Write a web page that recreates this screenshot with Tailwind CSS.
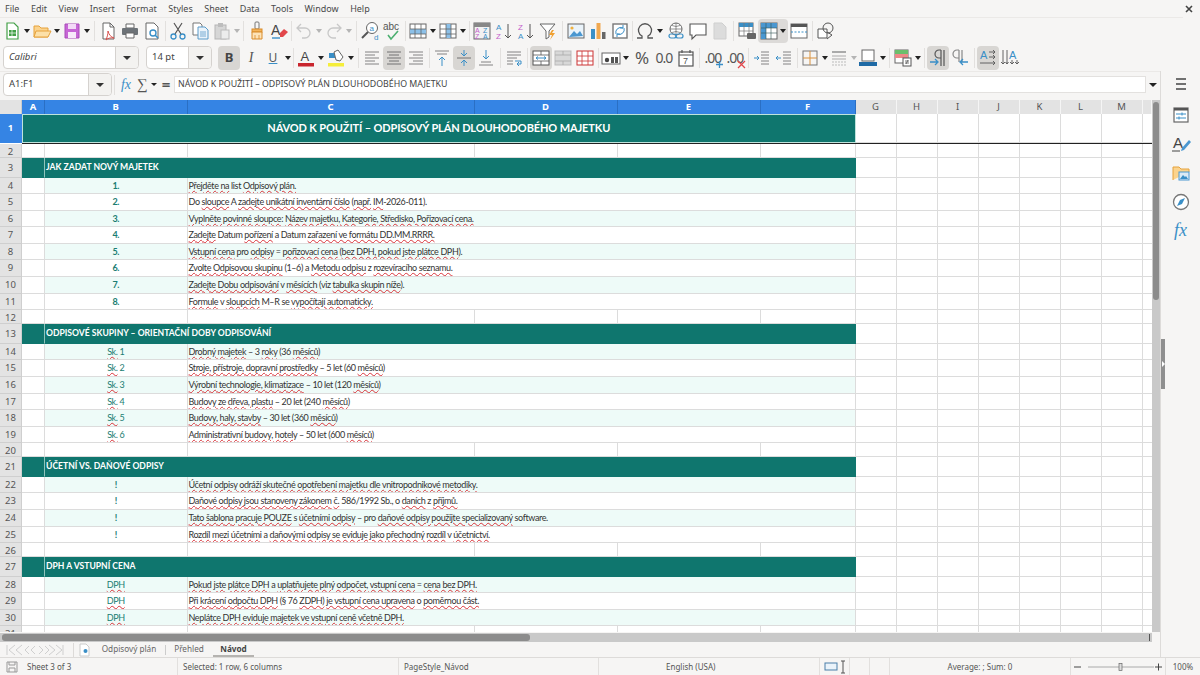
<!DOCTYPE html>
<html><head><meta charset="utf-8">
<script src="https://cdn.jsdelivr.net/npm/@tailwindcss/browser@4"></script>
</head>
<body class="w-[1200px] h-[675px] overflow-hidden bg-[#f6f5f4] font-['Noto_Sans',sans-serif] text-[#3d3d3d]">
<div class="relative flex flex-col w-[1200px] h-[675px]">

<!-- menu -->
<div class="h-[17px] shrink-0 flex items-center justify-between pl-[5px] pr-[7px] text-[9px] leading-none text-[#4a4a4a]">
  <div class="flex gap-[11.500px]"><span>File</span><span>Edit</span><span>View</span><span>Insert</span><span>Format</span><span>Styles</span><span>Sheet</span><span>Data</span><span>Tools</span><span>Window</span><span>Help</span></div>
  <svg class="w-[8px] h-[8px]" viewBox="0 0 8 8"><path d="M1 1l6 6M7 1L1 7" stroke="#444" stroke-width="1.6"/></svg>
</div>

<!-- toolbar 1 -->
<div class="h-[27px] shrink-0 mr-[17px] border-t border-[#ebe9e7] flex items-center pl-[1px] [&>span]:flex [&>span]:items-center [&>span]:justify-center [&>span]:w-[22px] [&>span]:h-[24px] [&>span]:shrink-0 [&>span]:rounded [&>span>svg]:w-[20px] [&>span>svg]:h-[20px] [&>svg]:w-[8px] [&>svg]:h-[4px] [&>svg]:shrink-0 [&>div]:flex [&>div]:justify-center [&>div]:shrink-0 [&>div>div]:w-px [&>div>div]:h-[20px] [&>div>div]:bg-[#e2e0de]">
  <span><svg viewBox="0 0 20 20"><path d="M5 2h7l4 4v12H5z" fill="#fff" stroke="#43a047" stroke-width="1.2"/><rect x="7" y="9" width="7" height="6" fill="#43a047"/><path d="M7 12h7M10 9v6" stroke="#fff" stroke-width=".7"/></svg></span>
  <svg viewBox="0 0 8 4"><path d="M1 0h6L4 4z" fill="#222"/></svg>
  <span><svg viewBox="0 0 20 20"><path d="M2 16V5h5l2 2h7v9z" fill="#fbd38d" stroke="#e6a23c"/><path d="M2 16l2-6h15l-3 6z" fill="#fce0a8" stroke="#e6a23c"/></svg></span>
  <svg viewBox="0 0 8 4"><path d="M1 0h6L4 4z" fill="#222"/></svg>
  <span><svg viewBox="0 0 20 20"><path d="M3 3h14v14H3z" fill="#c766d6" stroke="#a94cb8"/><rect x="6" y="3" width="8" height="5" fill="#f3daf7"/><rect x="6" y="11" width="8" height="6" fill="#f8e9fa"/></svg></span>
  <svg viewBox="0 0 8 4"><path d="M1 0h6L4 4z" fill="#222"/></svg>
  <div class="w-[6px]"><div></div></div>
  <span><svg viewBox="0 0 20 20"><path d="M5 2h7l4 4v12H5z" fill="#fff" stroke="#666"/><path d="M12 2v4h4" fill="none" stroke="#666"/><path d="M10 10c1 4 3 6 6 7-3-.5-6 0-8 2 1-3 2-5 2-9z" fill="none" stroke="#d9534f"/></svg></span>
  <span><svg viewBox="0 0 20 20"><path d="M6 3h8v4H6z" fill="#fff" stroke="#666"/><rect x="2" y="7" width="16" height="7" rx="1" fill="#6d7378"/><path d="M6 12h8v5H6z" fill="#fff" stroke="#666"/></svg></span>
  <span><svg viewBox="0 0 20 20"><path d="M4 2h8l4 4v12H4z" fill="#fff" stroke="#666"/><circle cx="11" cy="12" r="3" fill="none" stroke="#3a8fc7" stroke-width="1.4"/><path d="M13 14l3 3" stroke="#3a8fc7" stroke-width="1.6"/></svg></span>
  <div class="w-[4px]"><div></div></div>
  <span><svg viewBox="0 0 20 20"><path d="M6 2l7 11M14 2L7 13" stroke="#555" stroke-width="1.2"/><circle cx="5.500" cy="15.500" r="2.500" fill="none" stroke="#3a8fc7" stroke-width="1.300"/><circle cx="14.500" cy="15.500" r="2.500" fill="none" stroke="#3a8fc7" stroke-width="1.300"/></svg></span>
  <span><svg viewBox="0 0 20 20"><path d="M3 2h7l2 2v10H3z" fill="#fff" stroke="#777"/><path d="M8 6h7l3 3v9H8z" fill="#eaf3fa" stroke="#5a9bc9"/><path d="M10 11h6M10 13h6M10 15h6" stroke="#5a9bc9" stroke-width=".8"/></svg></span>
  <span><svg viewBox="0 0 20 20"><rect x="3" y="4" width="11" height="14" fill="#d6d6d6" stroke="#b5b5b5"/><rect x="6" y="2" width="5" height="4" fill="#bdbdbd"/><rect x="9" y="9" width="8" height="9" fill="#ececec" stroke="#bbb"/></svg></span>
  <svg viewBox="0 0 8 4"><path d="M1 0h6L4 4z" fill="#b5b5b5"/></svg>
  <div class="w-[5px]"><div></div></div>
  <span><svg viewBox="0 0 20 20"><rect x="8" y="1" width="4" height="7" rx="1" fill="none" stroke="#777"/><rect x="5" y="8" width="10" height="3" fill="#f3b45c" stroke="#d98c2b"/><path d="M5 11h10v7H5z" fill="#fde3b8" stroke="#d98c2b"/><path d="M8 14v4M12 14v4" stroke="#d98c2b" stroke-width=".8"/></svg></span>
  <span><svg viewBox="0 0 20 20"><text x="2" y="14" font-size="14" font-family="Liberation Sans" fill="#444">A</text><path d="M3 17h8" stroke="#3a8fc7" stroke-width="1.400"/><path d="M11 12l4-4 4 3-5 5h-3z" fill="#e2474b"/></svg></span>
  <div class="w-[3px]"><div></div></div>
  <span><svg viewBox="0 0 20 20"><path d="M7 3L3 7l4 4M3 7h8a5 5 0 0 1 0 10H8" fill="none" stroke="#c8c8c8" stroke-width="1.300"/></svg></span>
  <svg viewBox="0 0 8 4"><path d="M1 0h6L4 4z" fill="#b5b5b5"/></svg>
  <span><svg viewBox="0 0 20 20"><path d="M13 3l4 4-4 4M17 7H9a5 5 0 0 0 0 10h3" fill="none" stroke="#c8c8c8" stroke-width="1.300"/></svg></span>
  <svg viewBox="0 0 8 4"><path d="M1 0h6L4 4z" fill="#b5b5b5"/></svg>
  <div class="w-[6px]"><div></div></div>
  <span><svg viewBox="0 0 20 20"><circle cx="12" cy="7" r="5.500" fill="#fff" stroke="#666"/><path d="M8 11l-6 6" stroke="#555" stroke-width="2"/><text x="9.500" y="10" font-size="8" font-family="Liberation Sans" fill="#3a8fc7">a</text><text x="14" y="19" font-size="8" font-family="Liberation Sans" fill="#3a8fc7">d</text></svg></span>
  <span><svg viewBox="0 0 20 20"><text x="1" y="9" font-size="10" font-family="Liberation Sans" fill="#555">abc</text><path d="M6 14l3 4 7-8" fill="none" stroke="#4caf70" stroke-width="1.600"/></svg></span>
  <div class="w-[4px]"><div></div></div>
  <span><svg viewBox="0 0 20 20"><rect x="2" y="3" width="16" height="14" fill="#fff" stroke="#666"/><rect x="2" y="8" width="16" height="5" fill="#8cc0e8"/><path d="M2 8h16M2 13h16M7 3v14M13 3v14" stroke="#666" stroke-width=".8"/></svg></span>
  <svg viewBox="0 0 8 4"><path d="M1 0h6L4 4z" fill="#222"/></svg>
  <span><svg viewBox="0 0 20 20"><rect x="2" y="3" width="16" height="14" fill="#fff" stroke="#666"/><rect x="8" y="3" width="5" height="14" fill="#8cc0e8"/><path d="M2 8h16M2 13h16M8 3v14M13 3v14" stroke="#666" stroke-width=".8"/></svg></span>
  <svg viewBox="0 0 8 4"><path d="M1 0h6L4 4z" fill="#222"/></svg>
  <div class="w-[4px]"><div></div></div>
  <span><svg viewBox="0 0 20 20"><rect x="2" y="2" width="16" height="16" fill="#f2f2f2" stroke="#666"/><rect x="2" y="2" width="16" height="4" fill="#888"/><text x="3" y="12" font-size="7" font-family="Liberation Sans" fill="#c45ecb">A</text><text x="11" y="12" font-size="7" font-family="Liberation Sans" fill="#3a8fc7">Z</text><text x="3" y="18" font-size="7" font-family="Liberation Sans" fill="#c45ecb">Z</text><text x="11" y="18" font-size="7" font-family="Liberation Sans" fill="#3a8fc7">A</text></svg></span>
  <span><svg viewBox="0 0 20 20"><text x="2" y="9" font-size="8" font-family="Liberation Sans" fill="#3a8fc7">A</text><text x="2" y="18" font-size="8" font-family="Liberation Sans" fill="#c45ecb">Z</text><path d="M14 3v14M11 14l3 3 3-3" fill="none" stroke="#555"/></svg></span>
  <span><svg viewBox="0 0 20 20"><text x="2" y="9" font-size="8" font-family="Liberation Sans" fill="#c45ecb">Z</text><text x="2" y="18" font-size="8" font-family="Liberation Sans" fill="#3a8fc7">A</text><path d="M14 3v14M11 14l3 3 3-3" fill="none" stroke="#555"/></svg></span>
  <span><svg viewBox="0 0 20 20"><path d="M2 3h15l-6 7v6l-3 2v-8z" fill="#fff" stroke="#666"/><path d="M14 9l-3 5h3l-2 5 5-7h-3l2-3z" fill="#f0a030"/></svg></span>
  <div class="w-[6px]"><div></div></div>
  <span><svg viewBox="0 0 20 20"><rect x="2" y="3" width="16" height="14" fill="#eaf3fa" stroke="#666"/><circle cx="6" cy="7" r="1.600" fill="#f0b040"/><path d="M3 16l5-6 3 3 3-3 3 5z" fill="#4a97d0"/></svg></span>
  <span><svg viewBox="0 0 20 20"><rect x="3" y="8" width="4" height="10" fill="#3a8fc7"/><rect x="8.500" y="2" width="4" height="16" fill="#f0a850"/><rect x="14" y="11" width="3.500" height="7" fill="#666"/></svg></span>
  <span><svg viewBox="0 0 20 20"><rect x="3" y="3" width="14" height="14" fill="#fff" stroke="#777" stroke-width="1.400"/><path d="M6 13a5 5 0 0 1 7-6M14 7a5 5 0 0 1-7 6" fill="none" stroke="#3a8fc7"/><path d="M13 4v3h-3M7 16v-3h3" fill="none" stroke="#3a8fc7"/></svg></span>
  <div class="w-[3px]"><div></div></div>
  <span><svg viewBox="0 0 20 20"><path d="M2 17h5v-2a6.500 6.500 0 1 1 6 0v2h5" fill="none" stroke="#555" stroke-width="1.300"/></svg></span>
  <svg viewBox="0 0 8 4"><path d="M1 0h6L4 4z" fill="#222"/></svg>
  <div class="w-px"></div>
  <span><svg viewBox="0 0 20 20"><circle cx="10" cy="8" r="6" fill="#fff" stroke="#666"/><path d="M4 8h12M10 2v12M6 4.500q4 2 8 0M6 11.500q4-2 8 0" fill="none" stroke="#666" stroke-width=".7"/><rect x="3" y="13" width="7" height="4" rx="2" fill="none" stroke="#3a8fc7" stroke-width="1.200"/><rect x="10" y="13" width="7" height="4" rx="2" fill="none" stroke="#3a8fc7" stroke-width="1.200"/></svg></span>
  <span><svg viewBox="0 0 20 20"><path d="M2 3h16v11H8l-4 4v-4H2z" fill="#fff" stroke="#555" stroke-width="1.100"/></svg></span>
  <span><svg viewBox="0 0 20 20"><path d="M4 2h8l4 4v12H4z" fill="#dcdcdc" stroke="#cfcfcf"/></svg></span>
  <div class="w-[5px]"><div></div></div>
  <span><svg viewBox="0 0 20 20"><rect x="2" y="2" width="14" height="13" fill="#fff" stroke="#666"/><rect x="2" y="2" width="14" height="4" fill="#3a8fc7"/><path d="M2 10h14M7 2v13M12 2v13" stroke="#777" stroke-width=".7"/><rect x="10" y="12" width="9" height="6" rx="1" fill="#666"/></svg></span>
  <span class="bg-[#dcdad8] w-[30px]! justify-start! pl-px"><svg viewBox="0 0 20 20"><rect x="2" y="2" width="16" height="16" fill="#fff" stroke="#666"/><rect x="2" y="2" width="16" height="5" fill="#4a97d0"/><rect x="2" y="2" width="5" height="16" fill="#4a97d0"/><path d="M2 7h16M2 12h16M7 2v16M12 2v16" stroke="#355" stroke-width=".6"/></svg><svg class="w-[8px]! h-[4px]! shrink-0" viewBox="0 0 8 4"><path d="M1 0h6L4 4z" fill="#222"/></svg></span>
  <span><svg viewBox="0 0 20 20"><rect x="2" y="3" width="16" height="14" fill="#fff" stroke="#666"/><rect x="2" y="3" width="16" height="3" fill="#555"/><path d="M2 11h16" stroke="#3a8fc7" stroke-dasharray="2 1.500"/></svg></span>
  <div class="w-[5px]"><div></div></div>
  <span><svg viewBox="0 0 20 20"><path d="M2 8h9v9H2z" fill="#fff" stroke="#555"/><circle cx="12" cy="7" r="5" fill="none" stroke="#555"/><path d="M11 11l5 3-5 4" fill="none" stroke="#555"/></svg></span>
</div>

<!-- toolbar 2 -->
<div class="h-[27px] shrink-0 flex items-center pl-[3px] [&>span]:flex [&>span]:items-center [&>span]:justify-center [&>span]:w-[22px] [&>span]:h-[24px] [&>span]:shrink-0 [&>span]:rounded [&>span>svg]:w-[20px] [&>span>svg]:h-[20px] [&>svg]:w-[8px] [&>svg]:h-[4px] [&>svg]:shrink-0 [&>div]:flex [&>div]:justify-center [&>div]:shrink-0 [&>div>div]:w-px [&>div>div]:h-[20px] [&>div>div]:bg-[#e2e0de]">
  <div class="w-[136px] h-[23px] border border-[#d5d2cf] rounded bg-white items-center justify-between! text-[9.500px] italic text-[#444]"><p class="pl-[5px]">Calibri</p><p class="w-[23px] h-full bg-[#f3f2f0] border-l border-[#d5d2cf] rounded-r flex items-center justify-center"><svg class="w-[8px] h-[4px]" viewBox="0 0 8 4"><path d="M0 0h8L4 4z" fill="#333"/></svg></p></div>
  <div class="w-[7px]"></div>
  <div class="w-[66px] h-[23px] border border-[#d5d2cf] rounded bg-white items-center justify-between! text-[9.500px] text-[#444]"><p class="pl-[5px]">14 pt</p><p class="w-[23px] h-full bg-[#f3f2f0] border-l border-[#d5d2cf] rounded-r flex items-center justify-center"><svg class="w-[8px] h-[4px]" viewBox="0 0 8 4"><path d="M0 0h8L4 4z" fill="#333"/></svg></p></div>
  <div class="w-[6px]"></div>
  <span class="bg-[#d8d6d3] text-[13px] font-bold text-[#444]">B</span>
  <span class="text-[14px] italic font-['Liberation_Serif',serif] text-[#555]">I</span>
  <span class="text-[12px] underline decoration-[#3a8fc7] text-[#555]">U</span>
  <svg viewBox="0 0 8 4"><path d="M1 0h6L4 4z" fill="#222"/></svg>
  <div class="w-[3px]"><div></div></div>
  <span><svg viewBox="0 0 20 20"><text x="4.500" y="13" font-size="13" font-family="Liberation Sans" fill="#444">A</text><rect x="2" y="15" width="16" height="3.500" fill="#c9252d"/></svg></span>
  <svg viewBox="0 0 8 4"><path d="M1 0h6L4 4z" fill="#222"/></svg>
  <span><svg viewBox="0 0 20 20"><rect x="2" y="15" width="16" height="3.500" fill="#f5ee3a"/><rect x="3" y="5" width="6" height="5" fill="#3a8fc7"/><path d="M8 4l4-2 5 7-3 4-4-1z" fill="#fff" stroke="#666"/></svg></span>
  <svg viewBox="0 0 8 4"><path d="M1 0h6L4 4z" fill="#222"/></svg>
  <div class="w-[6px]"><div></div></div>
  <span><svg viewBox="0 0 20 20"><path d="M3 4h14M3 7h10M3 10h14M3 13h10M3 16h14" stroke="#777" stroke-width=".9"/></svg></span>
  <span class="bg-[#d8d6d3]"><svg viewBox="0 0 20 20"><path d="M3 4h14M5 7h10M3 10h14M5 13h10M3 16h14" stroke="#666" stroke-width=".9"/></svg></span>
  <span><svg viewBox="0 0 20 20"><path d="M3 4h14M7 7h10M3 10h14M7 13h10M3 16h14" stroke="#777" stroke-width=".9"/></svg></span>
  <div class="w-[4px]"><div></div></div>
  <span><svg viewBox="0 0 20 20"><path d="M3 3h14M5 6h10" stroke="#777" stroke-width=".9"/><path d="M10 18V9M7 12l3-3 3 3" fill="none" stroke="#3a8fc7"/></svg></span>
  <span class="bg-[#d8d6d3]"><svg viewBox="0 0 20 20"><path d="M3 10h14" stroke="#666" stroke-width=".9"/><path d="M10 2v6M7 5l3 3 3-3M10 18v-6M7 15l3-3 3 3" fill="none" stroke="#3a8fc7"/></svg></span>
  <span><svg viewBox="0 0 20 20"><path d="M5 14h10M3 17h14" stroke="#777" stroke-width=".9"/><path d="M10 2v9M7 8l3 3 3-3" fill="none" stroke="#3a8fc7"/></svg></span>
  <div class="w-[6px]"><div></div></div>
  <span><svg viewBox="0 0 20 20"><path d="M3 4h14M3 7h14M3 10h10M3 13h6M3 16h6" stroke="#777" stroke-width=".9"/><path d="M11 13h6v3h-4M15 14l-2 2 2 2" fill="none" stroke="#3a8fc7"/></svg></span>
  <div class="w-[5px]"><div></div></div>
  <span class="bg-[#d8d6d3]"><svg viewBox="0 0 20 20"><rect x="2" y="3" width="16" height="14" fill="#fff" stroke="#555"/><path d="M2 7h16M2 13h16M10 3v4M10 13v4" stroke="#555" stroke-width=".8"/><path d="M5 10h10M5 10l2-1.500M5 10l2 1.500M15 10l-2-1.500M15 10l-2 1.500" stroke="#3a8fc7"/></svg></span>
  <span><svg viewBox="0 0 20 20"><rect x="2" y="3" width="16" height="14" fill="#d8d8d8" stroke="#bbb"/><path d="M2 7h16M2 13h16M10 3v4M10 13v4" stroke="#aaa" stroke-width=".8"/></svg></span>
  <span><svg viewBox="0 0 20 20"><rect x="2" y="3" width="16" height="14" fill="#fff" stroke="#c33"/><path d="M2 8h16M2 13h16M7 3v14M13 3v14" stroke="#c33" stroke-width=".8"/></svg></span>
  <div class="w-[4px]"><div></div></div>
  <span><svg viewBox="0 0 20 20"><rect x="1" y="5" width="18" height="11" fill="#fff" stroke="#666"/><circle cx="6" cy="12" r="2.200" fill="#444"/><rect x="10" y="9" width="3" height="6" fill="#555"/><rect x="14" y="9" width="3" height="6" fill="#555"/></svg></span>
  <svg viewBox="0 0 8 4"><path d="M1 0h6L4 4z" fill="#222"/></svg>
  <div class="w-px"></div>
  <span class="text-[17px] text-[#555]">%</span>
  <span class="text-[14px] tracking-[-1px] text-[#555]">0.0</span>
  <span><svg viewBox="0 0 20 20"><rect x="3" y="4" width="14" height="14" fill="#fff" stroke="#555" stroke-width="1.200"/><path d="M3 7h14M6 2v3M14 2v3" stroke="#555" stroke-width="1.200"/><text x="7" y="16" font-size="9" font-family="Liberation Sans" fill="#555">7</text></svg></span>
  <div class="w-[5px]"><div></div></div>
  <span class="relative text-[14px] tracking-[-1px] text-[#555]">.00<svg class="absolute right-0 bottom-[1px] w-[9px]! h-[9px]!" viewBox="0 0 9 9"><path d="M4.500 1v7M1 4.500h7" stroke="#3a8fc7" stroke-width="1.300"/></svg></span>
  <span class="relative text-[14px] tracking-[-1px] text-[#555]">.00<svg class="absolute right-0 bottom-[1px] w-[9px]! h-[9px]!" viewBox="0 0 9 9"><path d="M1 1l7 7M8 1L1 8" stroke="#e2474b" stroke-width="1.300"/></svg></span>
  <div class="w-[5px]"><div></div></div>
  <span><svg viewBox="0 0 20 20"><path d="M9 4h8M9 7h8M9 10h8M9 13h8M9 16h8" stroke="#777" stroke-width=".9"/><path d="M2 10h5M5 8l2 2-2 2" fill="none" stroke="#3a8fc7"/></svg></span>
  <span><svg viewBox="0 0 20 20"><path d="M9 4h8M9 7h8M9 10h8M9 13h8M9 16h8" stroke="#777" stroke-width=".9"/><path d="M7 10H2M4 8l-2 2 2 2" fill="none" stroke="#3a8fc7"/></svg></span>
  <div class="w-[4px]"><div></div></div>
  <span><svg viewBox="0 0 20 20"><rect x="3" y="3" width="14" height="14" fill="none" stroke="#777"/><path d="M10 3v14M3 10h14" stroke="#d9913c"/></svg></span>
  <svg viewBox="0 0 8 4"><path d="M1 0h6L4 4z" fill="#222"/></svg>
  <div class="w-0 -ml-px"></div>
  <span><svg viewBox="0 0 20 20"><path d="M3 4h14" stroke="#aaa" stroke-width="2"/><path d="M3 8h14M3 11h14" stroke="#aaa" stroke-width="1.200"/><path d="M3 14h14M3 17h14" stroke="#bbb" stroke-dasharray="2 1"/></svg></span>
  <svg viewBox="0 0 8 4"><path d="M1 0h6L4 4z" fill="#b5b5b5"/></svg>
  <div class="w-0 -ml-px"></div>
  <span><svg viewBox="0 0 20 20"><rect x="4" y="2" width="12" height="11" fill="#fff" stroke="#666"/><rect x="1" y="14" width="18" height="4" fill="#1f6aa5"/></svg></span>
  <svg viewBox="0 0 8 4"><path d="M1 0h6L4 4z" fill="#222"/></svg>
  <div class="w-[5px]"><div></div></div>
  <span><svg viewBox="0 0 20 20"><rect x="2" y="2" width="13" height="13" fill="#fff" stroke="#666"/><rect x="2" y="2" width="13" height="4" fill="#6cbf6c"/><rect x="2" y="6" width="13" height="4" fill="#e88"/><rect x="10" y="10" width="8" height="8" fill="#fff" stroke="#555"/><path d="M12 13h4M12 15h4M15 12l-2 4" stroke="#555" stroke-width=".8"/></svg></span>
  <svg viewBox="0 0 8 4"><path d="M1 0h6L4 4z" fill="#222"/></svg>
  <div class="w-[5px]"><div></div></div>
  <span class="bg-[#d8d6d3]"><svg viewBox="0 0 20 20"><path d="M16 2v16M13 2v16M13 2h-2a4 4 0 0 0 0 8h2" fill="none" stroke="#555" stroke-width="1.200"/><path d="M2 14h7M7 11l3 3-3 3" fill="none" stroke="#3a8fc7" stroke-width="1.300"/></svg></span>
  <span><svg viewBox="0 0 20 20"><path d="M12 2v12M9 2v12M9 2H7a4 4 0 0 0 0 8h2" fill="none" stroke="#888" stroke-width="1.200"/><path d="M18 14h-7M13 11l-3 3 3 3" fill="none" stroke="#3a8fc7" stroke-width="1.300"/></svg></span>
  <div class="w-[6px]"><div></div></div>
  <span class="bg-[#d8d6d3]"><svg viewBox="0 0 20 20"><text x="2" y="11" font-size="11" font-family="Liberation Sans" fill="#3a8fc7">A</text><path d="M11 4h6M15 2l2 2-2 2M11 9h6M15 7l2 2-2 2M2 15h15M15 13l2 2-2 2" fill="none" stroke="#555" stroke-width=".9"/></svg></span>
  <span><svg viewBox="0 0 20 20"><text x="9" y="11" font-size="11" font-family="Liberation Sans" fill="#3a8fc7">A</text><path d="M3 2v14M1 14l2 2 2-2M7 2v14M5.500 14l1.500 2 1.500-2M12 12v4M10 14l2 2 2-2M17 12v4M15 14l2 2 2-2" fill="none" stroke="#555" stroke-width=".9"/></svg></span>
</div>

<!-- lower region: main + sidebar -->
<div class="flex flex-1 min-h-0">
  <div class="w-[1161px] flex flex-col border-r border-[#dddbd9]">
    <!-- formula bar -->
    <div class="h-[29px] shrink-0 border-t border-[#ebe9e7] flex items-center pb-[3px] text-[8.800px] text-[#444] pl-[3px]">
      <div class="w-[109px] h-[23px] border border-[#d5d2cf] rounded bg-white flex items-center justify-between"><p class="pl-[5px] text-[9.500px]">A1:F1</p><p class="w-[23px] h-full bg-[#f3f2f0] border-l border-[#d5d2cf] rounded-r flex items-center justify-center"><svg class="w-[8px] h-[4px]" viewBox="0 0 8 4"><path d="M0 0h8L4 4z" fill="#333"/></svg></p></div>
      <div class="w-px h-[20px] bg-[#e2e0de] ml-[2px]"></div>
      <span class="ml-[3px] w-[16px] text-center italic font-['Liberation_Serif',serif] text-[14px] leading-none text-[#3a8fc7]">fx</span>
      <span class="ml-[2px] w-[12px] text-center font-['Liberation_Serif',serif] text-[15px] leading-none text-[#555]">∑</span>
      <svg class="ml-[3px] w-[6px] h-[3px]" viewBox="0 0 8 4"><path d="M0 0h8L4 4z" fill="#222"/></svg>
      <span class="ml-[4px] w-[10px] text-center text-[15px] leading-none font-bold text-[#555]">=</span>
      <div class="ml-[3px] w-[972px] h-[17px] bg-white border border-[#e3e1df] flex items-center pl-[3px] text-[#444]">NÁVOD K POUŽITÍ – ODPISOVÝ PLÁN DLOUHODOBÉHO MAJETKU</div>
      <svg class="ml-[3px] w-[8px] h-[4px]" viewBox="0 0 8 4"><path d="M0 0h8L4 4z" fill="#222"/></svg>
    </div>

    <!-- sheet + v scrollbar -->
    <div class="flex h-[532px] shrink-0 bg-white overflow-hidden">
      <div class="w-[1152px] shrink-0 overflow-hidden">
        <!-- column headers -->
        <div class="h-[14px] grid grid-cols-[22px_23px_142.500px_287px_143px_143px_95px_41px_41px_41px_41px_41px_41px_41px_9.500px] text-[9.500px] leading-[13px] text-center font-['Noto_Sans',sans-serif] bg-[#e3e3e3] text-[#555] [&>div]:border-r">
          <div class="bg-[#e3e3e3] border-[#ccc]"></div>
          <div class="bg-[#3584e4] border-[#2a6fc4] text-white font-bold">A</div>
          <div class="bg-[#3584e4] border-[#2a6fc4] text-white font-bold">B</div>
          <div class="bg-[#3584e4] border-[#2a6fc4] text-white font-bold">C</div>
          <div class="bg-[#3584e4] border-[#2a6fc4] text-white font-bold">D</div>
          <div class="bg-[#3584e4] border-[#2a6fc4] text-white font-bold">E</div>
          <div class="bg-[#3584e4] border-[#2a6fc4] text-white font-bold">F</div>
          <div class="border-[#f5f5f5]">G</div><div class="border-[#f5f5f5]">H</div><div class="border-[#f5f5f5]">I</div><div class="border-[#f5f5f5]">J</div><div class="border-[#f5f5f5]">K</div><div class="border-[#f5f5f5]">L</div><div class="border-[#f5f5f5]">M</div><div class="border-[#f5f5f5]"></div>
        </div>

        <!-- rows -->
        <div class="font-['Lato',sans-serif] text-[9px] tracking-[-0.38px] text-[#333] [&>div]:grid [&>div]:grid-cols-[22px_23px_142.500px_287px_143px_143px_95px_296.500px] [&>div>*]:border-b [&>div>*]:border-r [&>div>*]:border-[#dcdcdc] [&>div>*]:overflow-hidden [&>div>*]:whitespace-nowrap [&>div>*]:leading-[15px] [&>div>*:first-child]:bg-[#e3e3e3] [&>div>*:first-child]:border-[#cfcfcf] [&>div>*:first-child]:text-center [&>div>*:first-child]:font-['Noto_Sans',sans-serif] [&>div>*:first-child]:tracking-normal [&>div>*:first-child]:text-[#555] [&>div>*:first-child]:text-[9.500px] [&>div>*:last-child]:border-r-0 [&>div>*:last-child]:bg-[repeating-linear-gradient(90deg,transparent_0,transparent_40px,#dcdcdc_40px,#dcdcdc_41px)] [&_u]:decoration-wavy [&_u]:decoration-[#d8333a] [&_u]:decoration-1 [&_u]:underline-offset-[1px]">

          <div class="h-[29px]"><div class="bg-[#3584e4]! text-white! font-bold leading-[28px]! border-[#3584e4]!">1</div><div class="col-span-6 bg-[#0f766e] border border-[#bfe3dc]! text-white font-bold text-[11px] tracking-[-0.12px] text-center leading-[26px]!">NÁVOD K POUŽITÍ – ODPISOVÝ PLÁN DLOUHODOBÉHO MAJETKU</div><div></div></div>
          <div class="h-px ml-[22px] bg-[#222] w-[1130px]"></div>
          <div class="h-[14px]"><div>2</div><div></div><div></div><div></div><div></div><div></div><div></div><div></div></div>

          <div class="h-[19.500px]"><div class="leading-[19px]!">3</div><div class="bg-[#0f766e] border-[#0f766e]! border-r-[#8fc4bb]!"></div><div class="col-span-5 bg-[#0f766e] border-[#0f766e]! text-white font-bold text-[8.600px] tracking-normal pl-px leading-[18px]!">JAK ZADAT NOVÝ MAJETEK</div><div></div></div>

          <div class="h-[16.600px]"><div>4</div><div></div><div class="bg-[#eefbf8] text-center text-[#1a7d72] font-bold">1.</div><div class="col-span-4 bg-[#eefbf8] pl-px"><u>Přejděte na</u> list <u>Odpisový plán.</u></div><div></div></div>
          <div class="h-[16.600px]"><div>5</div><div></div><div class="text-center text-[#1a7d72] font-bold">2.</div><div class="col-span-4 pl-px">Do <u>sloupce</u> A <u>zadejte unikátní inventární číslo</u> (<u>např.</u> <u>IM</u>-2026-011).</div><div></div></div>
          <div class="h-[16.600px]"><div>6</div><div></div><div class="bg-[#eefbf8] text-center text-[#1a7d72] font-bold">3.</div><div class="col-span-4 bg-[#eefbf8] pl-px"><u>Vyplněte povinné sloupce:</u> <u>Název majetku, Kategorie, Středisko, Pořizovací cena.</u></div><div></div></div>
          <div class="h-[16.600px]"><div>7</div><div></div><div class="text-center text-[#1a7d72] font-bold">4.</div><div class="col-span-4 pl-px"><u>Zadejte</u> Datum <u>pořízení</u> a Datum <u>zařazení ve formátu DD.MM.RRRR.</u></div><div></div></div>
          <div class="h-[16.600px]"><div>8</div><div></div><div class="bg-[#eefbf8] text-center text-[#1a7d72] font-bold">5.</div><div class="col-span-4 bg-[#eefbf8] pl-px"><u>Vstupní cena</u> pro <u>odpisy</u> = <u>pořizovací cena</u> (<u>bez DPH, pokud jste plátce DPH</u>).</div><div></div></div>
          <div class="h-[16.600px]"><div>9</div><div></div><div class="text-center text-[#1a7d72] font-bold">6.</div><div class="col-span-4 pl-px"><u>Zvolte Odpisovou skupinu</u> (1–6) a <u>Metodu odpisu</u> z <u>rozevíracího seznamu.</u></div><div></div></div>
          <div class="h-[16.600px]"><div>10</div><div></div><div class="bg-[#eefbf8] text-center text-[#1a7d72] font-bold">7.</div><div class="col-span-4 bg-[#eefbf8] pl-px"><u>Zadejte Dobu odpisování</u> v <u>měsících</u> (viz <u>tabulka skupin níže</u>).</div><div></div></div>
          <div class="h-[16.600px]"><div>11</div><div></div><div class="text-center text-[#1a7d72] font-bold">8.</div><div class="col-span-4 pl-px"><u>Formule</u> v <u>sloupcích</u> M–R se <u>vypočítají automaticky.</u></div><div></div></div>
          <div class="h-[14px]"><div>12</div><div></div><div></div><div></div><div></div><div></div><div></div><div></div></div>

          <div class="h-[19.500px]"><div class="leading-[19px]!">13</div><div class="bg-[#0f766e] border-[#0f766e]! border-r-[#8fc4bb]!"></div><div class="col-span-5 bg-[#0f766e] border-[#0f766e]! text-white font-bold text-[8.600px] tracking-normal pl-px leading-[18px]!">ODPISOVÉ SKUPINY – ORIENTAČNÍ DOBY ODPISOVÁNÍ</div><div></div></div>

          <div class="h-[16.600px]"><div>14</div><div></div><div class="bg-[#eefbf8] text-center text-[#1a7d72]"><u>Sk.</u> 1</div><div class="col-span-4 bg-[#eefbf8] pl-px"><u>Drobný majetek</u> – 3 <u>roky</u> (36 <u>měsíců</u>)</div><div></div></div>
          <div class="h-[16.600px]"><div>15</div><div></div><div class="text-center text-[#1a7d72]"><u>Sk.</u> 2</div><div class="col-span-4 pl-px"><u>Stroje, přístroje, dopravní prostředky</u> – 5 let (60 <u>měsíců</u>)</div><div></div></div>
          <div class="h-[16.600px]"><div>16</div><div></div><div class="bg-[#eefbf8] text-center text-[#1a7d72]"><u>Sk.</u> 3</div><div class="col-span-4 bg-[#eefbf8] pl-px"><u>Výrobní technologie, klimatizace</u> – 10 let (120 <u>měsíců</u>)</div><div></div></div>
          <div class="h-[16.600px]"><div>17</div><div></div><div class="text-center text-[#1a7d72]"><u>Sk.</u> 4</div><div class="col-span-4 pl-px"><u>Budovy ze dřeva, plastu</u> – 20 let (240 <u>měsíců</u>)</div><div></div></div>
          <div class="h-[16.600px]"><div>18</div><div></div><div class="bg-[#eefbf8] text-center text-[#1a7d72]"><u>Sk.</u> 5</div><div class="col-span-4 bg-[#eefbf8] pl-px"><u>Budovy, haly, stavby</u> – 30 let (360 <u>měsíců</u>)</div><div></div></div>
          <div class="h-[16.600px]"><div>19</div><div></div><div class="text-center text-[#1a7d72]"><u>Sk.</u> 6</div><div class="col-span-4 pl-px"><u>Administrativní budovy, hotely</u> – 50 let (600 <u>měsíců</u>)</div><div></div></div>
          <div class="h-[14px]"><div>20</div><div></div><div></div><div></div><div></div><div></div><div></div><div></div></div>

          <div class="h-[19.500px]"><div class="leading-[19px]!">21</div><div class="bg-[#0f766e] border-[#0f766e]! border-r-[#8fc4bb]!"></div><div class="col-span-5 bg-[#0f766e] border-[#0f766e]! text-white font-bold text-[8.600px] tracking-normal pl-px leading-[18px]!">ÚČETNÍ VS. DAŇOVÉ ODPISY</div><div></div></div>

          <div class="h-[16.600px]"><div>22</div><div></div><div class="bg-[#eefbf8] text-center text-[#1a7d72] font-bold">!</div><div class="col-span-4 bg-[#eefbf8] pl-px"><u>Účetní odpisy odráží skutečné opotřebení majetku dle vnitropodnikové metodiky.</u></div><div></div></div>
          <div class="h-[16.600px]"><div>23</div><div></div><div class="text-center text-[#1a7d72] font-bold">!</div><div class="col-span-4 pl-px"><u>Daňové odpisy jsou stanoveny zákonem</u> <u>č.</u> 586/1992 Sb., o <u>daních</u> z <u>příjmů.</u></div><div></div></div>
          <div class="h-[16.600px]"><div>24</div><div></div><div class="bg-[#eefbf8] text-center text-[#1a7d72] font-bold">!</div><div class="col-span-4 bg-[#eefbf8] pl-px"><u>Tato šablona pracuje POUZE</u> s <u>účetními odpisy</u> – pro <u>daňové odpisy použijte specializovaný</u> software.</div><div></div></div>
          <div class="h-[16.600px]"><div>25</div><div></div><div class="text-center text-[#1a7d72] font-bold">!</div><div class="col-span-4 pl-px"><u>Rozdíl mezi účetními</u> a <u>daňovými odpisy se eviduje jako přechodný rozdíl</u> v <u>účetnictví.</u></div><div></div></div>
          <div class="h-[14px]"><div>26</div><div></div><div></div><div></div><div></div><div></div><div></div><div></div></div>

          <div class="h-[19.500px]"><div class="leading-[19px]!">27</div><div class="bg-[#0f766e] border-[#0f766e]! border-r-[#8fc4bb]!"></div><div class="col-span-5 bg-[#0f766e] border-[#0f766e]! text-white font-bold text-[8.600px] tracking-normal pl-px leading-[18px]!">DPH A VSTUPNÍ CENA</div><div></div></div>

          <div class="h-[16.600px]"><div>28</div><div></div><div class="bg-[#eefbf8] text-center text-[#1a7d72]"><u>DPH</u></div><div class="col-span-4 bg-[#eefbf8] pl-px"><u>Pokud jste plátce DPH</u> a <u>uplatňujete plný odpočet, vstupní cena</u> = <u>cena bez DPH.</u></div><div></div></div>
          <div class="h-[16.600px]"><div>29</div><div></div><div class="text-center text-[#1a7d72]"><u>DPH</u></div><div class="col-span-4 pl-px"><u>Při krácení odpočtu DPH</u> (§ 76 <u>ZDPH)</u> <u>je vstupní cena upravena</u> o <u>poměrnou část.</u></div><div></div></div>
          <div class="h-[16.600px]"><div>30</div><div></div><div class="bg-[#eefbf8] text-center text-[#1a7d72]"><u>DPH</u></div><div class="col-span-4 bg-[#eefbf8] pl-px"><u>Neplátce DPH eviduje majetek ve vstupní ceně včetně DPH.</u></div><div></div></div>
          <div class="h-[14px]"><div>31</div><div></div><div></div><div></div><div></div><div></div><div></div><div></div></div>
        </div>
      </div>
      <!-- vertical scrollbar -->
      <div class="w-[8px] shrink-0 bg-[#c9c9c9] pt-[2px] px-[1px]"><div class="h-[198px] bg-[#8c8c8c] rounded-[3px]"></div></div>
    </div>

    <!-- horizontal scrollbar -->
    <div class="h-[9px] mt-[1px] shrink-0 w-[1152px] bg-[#c9c9c9] py-[1px] pl-[2px] flex justify-between pr-[2px]">
      <div class="w-[528px] bg-[#8c8c8c] rounded-[3px]"></div>
      <div class="w-[1px] bg-[#555]"></div>
    </div>

    <!-- tabs -->
    <div class="flex-1 flex items-center text-[8.200px] whitespace-nowrap text-[#666]">
      <div class="w-[62px] ml-[5px] flex items-center h-full"><svg class="w-[60px] h-[12px]" viewBox="0 0 60 12" fill="none" stroke="#cfcfcf"><path d="M2 1v10M10 1L4 6l6 5M17 1l-6 5 6 5M24 2l-4 4 4 4M30 2l-4 4 4 4M34 2l4 4-4 4M40 2l4 4-4 4M44 1l6 5-6 5M51 1l6 5-6 5M58 1v10"/></svg></div>
      <div class="w-px h-[14px] bg-[#dcdad8] ml-[6px]"></div>
      <svg class="ml-[5px] w-[12px] h-[14px]" viewBox="0 0 12 14"><path d="M1 1h6l3 3v9H1z" fill="#fff" stroke="#ccc"/><circle cx="6.500" cy="8" r="2" fill="#3a8fc7"/></svg>
      <span class="ml-[8px] w-[60px] text-center">Odpisový plán</span>
      <div class="w-px h-[10px] bg-[#ccc] ml-[6px]"></div>
      <span class="ml-[8px] w-[30px] text-center">Přehled</span>
      <div class="relative ml-[9px] w-[41px] h-full flex items-center justify-center font-bold text-[#444]">Návod<div class="absolute left-0 right-0 bottom-0 h-[2px] bg-[#b5b3b0]"></div></div>
    </div>
  </div>

  <!-- sidebar -->
  <div class="flex-1 flex flex-col items-center pt-[2px] gap-[7px] [&>svg]:w-[22px] [&>svg]:h-[22px]">
    <svg class="mb-[2px]" viewBox="0 0 22 22"><path d="M6 6h10M6 11h10M6 16h10" stroke="#444" stroke-width="1.500"/></svg>
    <svg viewBox="0 0 22 22"><rect x="4" y="4" width="14" height="14" fill="#fff" stroke="#666" stroke-width="1.200"/><rect x="4" y="4" width="14" height="2.500" fill="#555"/><path d="M6 10h10M6 14h10" stroke="#3a8fc7"/><path d="M12 8.500v3M9 12.500v3" stroke="#3a8fc7"/></svg>
    <svg viewBox="0 0 22 22"><text x="3" y="15" font-size="15" font-family="Liberation Sans" fill="#444">A</text><path d="M2 18h8" stroke="#444"/><path d="M19 7l-7 8-1 3 3-1 7-8z" fill="#4a97d0"/></svg>
    <svg viewBox="0 0 22 22"><path d="M3 18V5h6l2 2h8v3" fill="#fbd38d" stroke="#e6a23c"/><rect x="9" y="10" width="10" height="8" fill="#dceaf5" stroke="#4a97d0"/><path d="M10 17l3-4 2 2 1-1 2 3z" fill="#3a8fc7"/></svg>
    <svg viewBox="0 0 22 22"><circle cx="11" cy="11" r="7.500" fill="#fff" stroke="#777" stroke-width="1.300"/><path d="M15 7l-5 2-3 6 5-2z" fill="#3a8fc7"/></svg>
    <span class="italic font-['Liberation_Serif',serif] text-[18px] leading-[20px] text-[#3a8fc7]">fx</span>
  </div>
</div>

<!-- status bar -->
<div class="h-[18px] shrink-0 border-t border-[#dddbd9] flex items-center text-[8px] whitespace-nowrap text-[#555] [&>div]:h-full [&>div]:flex [&>div]:items-center [&>div]:shrink-0 [&>div]:border-r [&>div]:border-[#e2e0de]">
  <div class="w-[178px] pl-[6px]"><svg class="w-[12px] h-[12px] mr-[9px]" viewBox="0 0 12 12"><path d="M1 1h10v10H1z" fill="none" stroke="#999"/><path d="M3 1v3h6V1M3 11V7h6v4" fill="none" stroke="#999"/></svg>Sheet 3 of 3</div>
  <div class="w-[221px] pl-[5px]">Selected: 1 row, 6 columns</div>
  <div class="w-[200px] pl-[5px]">PageStyle_Návod</div>
  <div class="w-[221px] pl-[67px]">English (USA)</div>
  <div class="w-[30px] justify-center"><svg class="w-[22px] h-[14px]" viewBox="0 0 22 14"><rect x="1" y="3" width="12" height="7" fill="#eaf3fa" stroke="#4a7fa8"/><path d="M17 1h4M19 1v12M17 13h4" stroke="#555"/></svg></div>
  <div class="w-[20px]"></div>
  <div class="w-[20px]"></div>
  <div class="w-[181px] justify-center">Average: ; Sum: 0</div>
  <div class="w-[95px] justify-center"><svg class="w-[88px] h-[10px]" viewBox="0 0 88 10"><path d="M0 5h7M81 5h7M84.500 1.500v7" stroke="#444"/><path d="M14 5h66" stroke="#aaa"/><rect x="45" y="1.500" width="3" height="7" fill="#ddd" stroke="#666" stroke-width=".7"/></svg></div>
  <div class="flex-1 border-r-0! justify-center">100%</div>
</div>

<!-- collapsed sidebar handle, overlaps the sheet edge -->
<div class="absolute left-[1161px] top-[339px] w-[4px] h-[50px] bg-[#8f8f8f] flex items-center"><svg class="w-[4px] h-[6px]" viewBox="0 0 4 6"><path d="M1 0l3 3-3 3z" fill="#fff"/></svg></div>
</div>
</body></html>
